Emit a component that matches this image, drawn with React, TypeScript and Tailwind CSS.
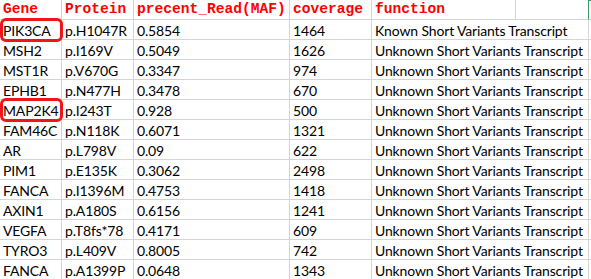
import React from "react";

const rows: [string, string, string, string, string][] = [
  ["PIK3CA", "p.H1047R", "0.5854", "1464", "Known Short Variants Transcript"],
  ["MSH2", "p.I169V", "0.5049", "1626", "Unknown Short Variants Transcript"],
  ["MST1R", "p.V670G", "0.3347", "974", "Unknown Short Variants Transcript"],
  ["EPHB1", "p.N477H", "0.3478", "670", "Unknown Short Variants Transcript"],
  ["MAP2K4", "p.I243T", "0.928", "500", "Unknown Short Variants Transcript"],
  ["FAM46C", "p.N118K", "0.6071", "1321", "Unknown Short Variants Transcript"],
  ["AR", "p.L798V", "0.09", "622", "Unknown Short Variants Transcript"],
  ["PIM1", "p.E135K", "0.3062", "2498", "Unknown Short Variants Transcript"],
  ["FANCA", "p.I1396M", "0.4753", "1418", "Unknown Short Variants Transcript"],
  ["AXIN1", "p.A180S", "0.6156", "1241", "Unknown Short Variants Transcript"],
  ["VEGFA", "p.T8fs*78", "0.4171", "609", "Unknown Short Variants Transcript"],
  ["TYRO3", "p.L409V", "0.8005", "742", "Unknown Short Variants Transcript"],
  ["FANCA", "p.A1399P", "0.0648", "1343", "Unknown Short Variants Transcript"],
];

const boxed = new Set([0, 4]);

export default function App() {
  const cell = "h-[20px] border-r border-b border-[#d4d4d4] pl-[3px] flex items-center whitespace-nowrap overflow-visible";
  const head = cell + " text-[#ff0000] font-bold text-[14.6px] [font-family:'Liberation_Mono',monospace]";
  const data = cell + " text-black text-[14px] tracking-[-0.15px] [font-family:Lato,sans-serif] pt-[1px]";
  return (
    <div className="w-[591px] h-[279px] overflow-hidden bg-white">
      <div className="grid grid-cols-[62px_72px_156px_82px_144px_73px_2px]">
        <div className={head}>Gene</div>
        <div className={head}>Protein</div>
        <div className={head}>precent_Read(MAF)</div>
        <div className={head}>coverage</div>
        <div className={head}>function</div>
        <div className={cell + " border-r-[#3c9a5f]"}></div>
        <div className="h-[20px] border-b border-[#d4d4d4] border-t border-t-[#3c9a5f]"></div>
        {rows.map((r, i) => (
          <React.Fragment key={i}>
            <div className={data + " relative"}>
              {r[0]}
              {boxed.has(i) && (
                <span className="absolute left-[0px] top-[-2px] w-[63px] h-[24px] border-[3px] border-[#f0141e] rounded-[6px]"></span>
              )}
            </div>
            <div className={data}>{r[1]}</div>
            <div className={data}>{r[2]}</div>
            <div className={data}>{r[3]}</div>
            <div className={data + " col-span-2"}>{r[4]}</div>
            <div className="h-[20px] border-b border-[#d4d4d4]"></div>
          </React.Fragment>
        ))}
      </div>
    </div>
  );
}
